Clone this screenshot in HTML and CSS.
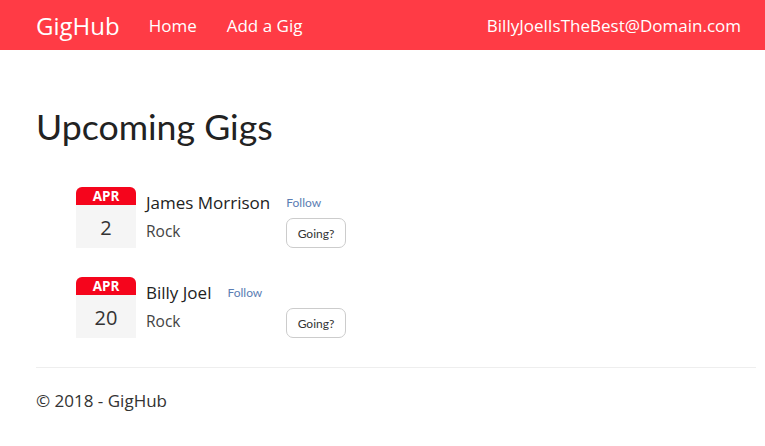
FILE: index.html
```html
<!DOCTYPE html>
<html>
<head>
<meta charset="utf-8">
<link rel="stylesheet" href="styles.css">
</head>
<body>
<nav class="navbar">
  <div class="nav-left">
    <a class="brand" href="#">GigHub</a>
    <a class="nav-link" href="#">Home</a>
    <a class="nav-link" href="#">Add a Gig</a>
  </div>
  <a class="nav-link user" href="#">BillyJoelIsTheBest@Domain.com</a>
</nav>
<main class="container">
  <h1 class="title">Upcoming Gigs</h1>
  <ul class="gigs">
    <li class="gig">
      <div class="date">
        <div class="month">APR</div>
        <div class="day">2</div>
      </div>
      <div class="details">
        <div class="artist-row"><span class="artist">James Morrison</span><a class="follow" href="#">Follow</a></div>
        <span class="genre">Rock</span>
        <button class="going">Going?</button>
      </div>
    </li>
    <li class="gig">
      <div class="date">
        <div class="month">APR</div>
        <div class="day">20</div>
      </div>
      <div class="details">
        <div class="artist-row"><span class="artist">Billy Joel</span><a class="follow" href="#">Follow</a></div>
        <span class="genre">Rock</span>
        <button class="going">Going?</button>
      </div>
    </li>
  </ul>
  <hr class="rule">
  <footer class="footer">© 2018 - GigHub</footer>
</main>
</body>
</html>
```
FILE: styles.css
```css
* { box-sizing: border-box; }
body {
  margin: 0;
  font-family: "Open Sans", "Liberation Sans", sans-serif;
  color: #333;
  background: #fff;
}
a { text-decoration: none; }
.navbar {
  height: 50px;
  background: #ff3b45;
  display: flex;
  align-items: center;
  justify-content: space-between;
  padding: 0 24px 0 36px;
}
.nav-left { display: flex; align-items: center; }
.brand {
  color: #fff;
  font-size: 24px;
  margin-right: 29px;
}
.nav-link {
  color: #fff;
  font-size: 17px;
  margin-right: 30px;
}
.nav-link.user { margin-right: 0; }
.container {
  padding: 0 9px 0 36px;
}
.title {
  font-family: Lato, "Open Sans", sans-serif;
  font-weight: 400;
  font-size: 35.7px;
  line-height: 40px;
  color: #222;
  margin: 57px 0 40px;
}
.gigs {
  list-style: none;
  margin: 0;
  padding: 0 0 0 40px;
}
.gig {
  display: flex;
  margin-bottom: 29px;
}
.date {
  width: 60px;
  height: 61px;
  background: #f5f5f5;
  border-radius: 6px 6px 0 0;
  overflow: hidden;
  text-align: center;
  margin-right: 10px;
}
.month {
  background: #f5051c;
  color: #fff;
  font-weight: 700;
  font-size: 13.5px;
  height: 18px;
  line-height: 19px;
}
.day {
  font-size: 20px;
  line-height: 46px;
  color: #333;
}
.details {
  display: grid;
  grid-template-columns: 140px auto;
  grid-template-rows: 30px 30px;
  align-items: center;
}
.artist-row {
  grid-column: 1 / 3;
  display: flex;
  align-items: center;
  white-space: nowrap;
}
.artist {
  font-size: 17px;
  color: #222;
  font-weight: 500;
}
.follow {
  font-family: Lato, "Open Sans", sans-serif;
  font-size: 12px;
  color: #5b7db3;
  margin-left: 16px;
}
.genre {
  font-size: 15.5px;
  color: #444;
  align-self: start;
  margin-top: 3px;
}
.going {
  justify-self: start;
  align-self: start;
  margin-top: 1px;
  font-family: Lato, "Open Sans", sans-serif;
  font-size: 12px;
  color: #333;
  background: #fff;
  border: 1px solid #ccc;
  border-radius: 7px;
  height: 30px;
  width: 60px;
  padding: 0;
}
.rule {
  border: 0;
  border-top: 1px solid #eee;
  margin: 1px 0 0 0;
}
.footer {
  font-size: 17px;
  color: #333;
  padding-top: 21px;
}
```
